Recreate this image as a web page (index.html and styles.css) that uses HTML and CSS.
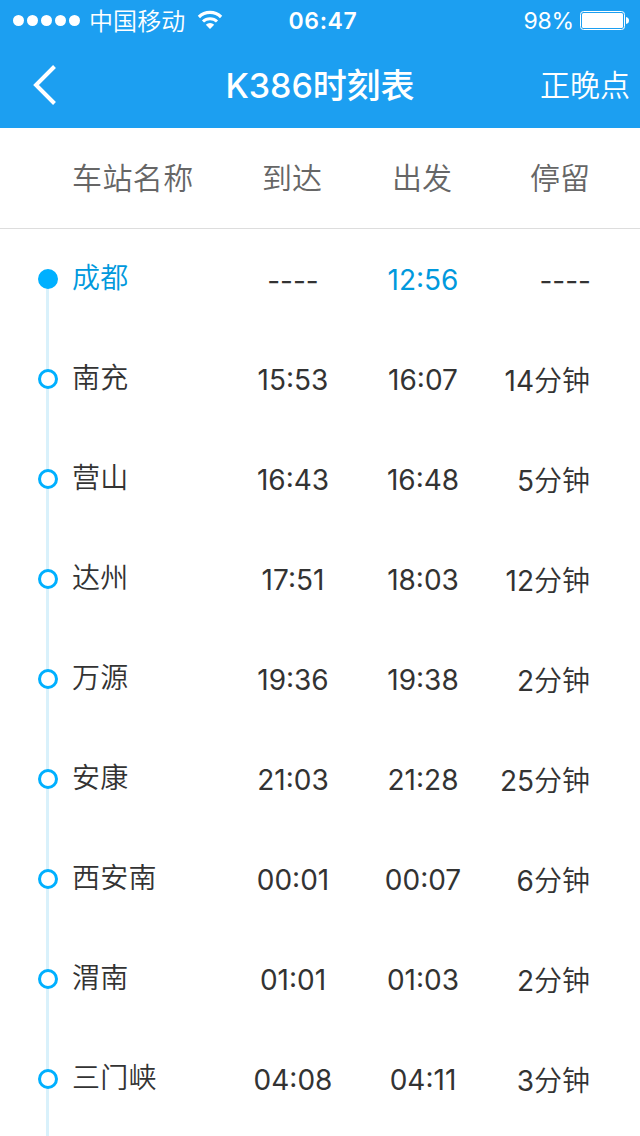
FILE: index.html
```html
<!DOCTYPE html>
<html lang="zh-CN">
<head>
    <meta charset="UTF-8">
    <title>K386时刻表</title>
    <link rel="stylesheet" href="styles.css">
</head>
<body>
    <div class="header">
        <div class="status">
            <div class="status_left">
                <div class="signal"><i></i><i></i><i></i><i></i><i></i></div>
                <span class="carrier">中国移动</span>
                <svg class="wifi" width="26" height="20" viewBox="0 0 26 20" fill="none" stroke="#fff">
                    <path d="M1.9 7a15.8 15.8 0 0 1 22.2 0" stroke-width="3.2"/>
                    <path d="M6 11.5a10 10 0 0 1 14 0" stroke-width="3"/>
                    <path d="M13 19l-4.2-4.2a6 6 0 0 1 8.4 0z" fill="#fff" stroke="none"/>
                </svg>
            </div>
            <span class="clock">06:47</span>
            <div class="status_right">
                <span>98%</span>
                <svg width="50" height="20" viewBox="0 0 50 20">
                    <rect x=".5" y=".5" width="44" height="18" rx="3" fill="none" stroke="#fff"/>
                    <rect x="2" y="2" width="41" height="15" rx="1.5" fill="#fff"/>
                    <path d="M46 6q3 .5 3 3.5t-3 3.5z" fill="#fff"/>
                </svg>
            </div>
        </div>
        <div class="nav">
            <svg class="back" width="26" height="42" viewBox="0 0 26 42" fill="none" stroke="#fff" stroke-width="4">
                <path d="M22.5 2.5L4 21l18.5 18.5"/>
            </svg>
            <h1>K386时刻表</h1>
            <span class="late">正晚点</span>
        </div>
    </div>

    <div class="row title">
        <span class="name">车站名称</span><span class="arrive">到达</span><span class="start">出发</span><span class="stay">停留</span>
    </div>

    <div class="list" id="list"></div>
    <div class="line tail"></div>

    <script>
        const stations=[
            ['成都','----','12:56','----'],
            ['南充','15:53','16:07','14分钟'],
            ['营山','16:43','16:48','5分钟'],
            ['达州','17:51','18:03','12分钟'],
            ['万源','19:36','19:38','2分钟'],
            ['安康','21:03','21:28','25分钟'],
            ['西安南','00:01','00:07','6分钟'],
            ['渭南','01:01','01:03','2分钟'],
            ['三门峡','04:08','04:11','3分钟']
        ];
        const cols=['name','arrive','start','stay'];
        const list=document.getElementById('list');
        stations.forEach(function(item,i){
            let row=document.createElement('div');
            row.className=i===0?'row station first':'row station';
            let line=document.createElement('div');
            line.className='line';
            line.innerHTML='<i class="dot"></i>';
            row.appendChild(line);
            item.forEach(function(text,n){
                let span=document.createElement('span');
                span.className=cols[n];
                // 数字和中文用不同的字重
                span.innerHTML=text.replace('分钟','<b>分钟</b>');
                row.appendChild(span);
            });
            list.appendChild(row);
        });
    </script>
</body>
</html>
```
FILE: styles.css
```css
*{
    margin:0;
    padding:0;
    box-sizing:border-box;
}
body{
    width:640px;
    height:1136px;
    background-color:white;
    color:#333;
    font-family:Inter,"Noto Sans CJK SC",sans-serif;
}
svg{
    display:block;
}
.header{
    height:128px;
    background-color:#1c9ff1;
    color:white;
}
.status{
    height:40px;
    display:grid;
    grid-template-columns:1fr auto 1fr;
    align-items:center;
    padding:0 10px 0 13px;
    font-size:24px;
}
.status_left,.status_right,.signal{
    display:flex;
    align-items:center;
}
.status_right{
    justify-content:flex-end;
    gap:6px;
}
.status_right svg{
    margin-top:2px;
}
.status_right span{
    font-size:23px;
    padding-top:1px;
    letter-spacing:-.2px;
}
.signal{
    gap:3px;
}
.signal i{
    width:11px;
    height:11px;
    border-radius:50%;
    background-color:white;
}
.carrier{
    margin:0 12px 0 9px;
    padding-bottom:2px;
    font-weight:350;
    font-family:"Noto Sans CJK SC DemiLight","Noto Sans CJK SC",sans-serif;
    letter-spacing:.1px;
}
.clock{
    font-size:23px;
    font-weight:600;
    letter-spacing:.6px;
    padding:1px 0 0 3px;
}
.nav{
    height:88px;
    display:grid;
    grid-template-columns:1fr auto 1fr;
    align-items:center;
    padding:0 10px 0;
}
.back{
    margin:1px 0 0 22px;
}
.nav h1{
    font-size:34px;
    font-weight:500;
    line-height:40px;
    letter-spacing:-.1px;
    padding-top:3px;
}
.late{
    justify-self:end;
    font-size:30px;
    font-weight:350;
    font-family:"Noto Sans CJK SC DemiLight","Noto Sans CJK SC",sans-serif;
    line-height:40px;
    padding-bottom:2px;
}
.row{
    height:100px;
    display:grid;
    grid-template-columns:156px 130px 130px 102px;
    padding-left:72px;
    align-items:center;
    font-size:28px;
}
.row .arrive,.row .start{
    text-align:center;
}
.row .stay{
    text-align:right;
}
.row .stay b{
    font-weight:350;
    font-family:"Noto Sans CJK SC DemiLight","Noto Sans CJK SC",sans-serif;
}
.title{
    height:101px;
    padding-bottom:5px;
    border-bottom:1px solid #ddd;
    color:#666;
    font-size:30px;
    font-weight:350;
    font-family:"Noto Sans CJK SC DemiLight","Noto Sans CJK SC",sans-serif;
}
.title .name{
    letter-spacing:.4px;
}
.title .arrive,.title .start{
    padding-right:2px;
}
.station{
    grid-template-columns:72px 156px 130px 130px 102px;
    padding-left:0;
}
.station .name{
    font-weight:350;
    font-family:"Noto Sans CJK SC DemiLight","Noto Sans CJK SC",sans-serif;
    padding-bottom:6px;
    letter-spacing:.2px;
}
.station .arrive,.station .start{
    padding-top:1px;
}
.station .stay{
    padding-bottom:1px;
}
.line{
    height:100px;
    width:3px;
    margin-left:46px;
    background-color:#d9f1fb;
    display:flex;
    align-items:center;
    justify-content:center;
}
.tail{
    height:7px;
}
.dot{
    flex:none;
    width:20px;
    height:20px;
    border:3px solid #00b0ff;
    border-radius:50%;
    background-color:white;
}
.first .line{
    background:linear-gradient(transparent 50%,#d9f1fb 50%);
}
.first .dot{
    background-color:#00b0ff;
}
.first .name,.first .start{
    color:#0099dd;
}
.first .arrive,.first .stay{
    padding-top:3px;
    padding-bottom:0;
}
.first .stay{
    margin-right:-1px;
}
```
